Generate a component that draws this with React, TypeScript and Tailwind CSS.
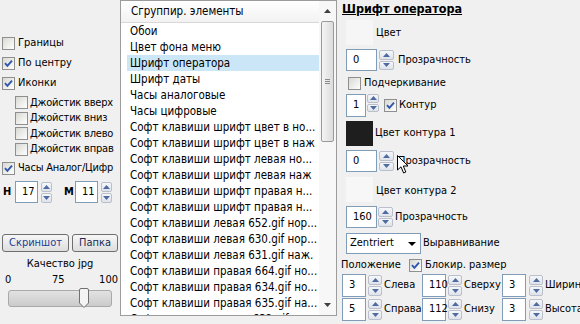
import clsx from "clsx";

const items = [
  "Обои",
  "Цвет фона меню",
  "Шрифт оператора",
  "Шрифт даты",
  "Часы аналоговые",
  "Часы цифровые",
  "Софт клавиши шрифт цвет в но...",
  "Софт клавиши шрифт цвет в наж",
  "Софт клавиши шрифт левая но...",
  "Софт клавиши шрифт левая наж",
  "Софт клавиши шрифт правая н...",
  "Софт клавиши шрифт правая н...",
  "Софт клавиши левая 652.gif нор...",
  "Софт клавиши левая 630.gif нор...",
  "Софт клавиши левая 631.gif наж.",
  "Софт клавиши правая 664.gif но...",
  "Софт клавиши правая 634.gif но...",
  "Софт клавиши правая 635.gif на...",
  "Софт клавиши центр. 632.gif но...",
];

function Check({ checked }: { checked?: boolean }) {
  return (
    <span className="flex h-[13px] w-[13px] shrink-0 items-center justify-center border border-[#8e8f8f] bg-gradient-to-br from-[#d8d8d3] to-white">
      {checked && (
        <svg width="9" height="9" viewBox="0 0 9 9">
          <path d="M1 4.2 L3.4 6.8 L8 1.6" fill="none" stroke="#2f55b0" strokeWidth="1.9" />
        </svg>
      )}
    </span>
  );
}

function Field({ value, className }: { value: string; className?: string }) {
  return (
    <div className={clsx("flex shrink-0 items-center border border-[#7f9db9] bg-white pl-[6px] text-black", className)}>
      {value}
    </div>
  );
}

function Arrow({ up }: { up?: boolean }) {
  return (
    <svg width="7" height="4" viewBox="0 0 7 4">
      <path d={up ? "M0 4 L3.5 0 L7 4 Z" : "M0 0 L3.5 4 L7 0 Z"} fill="#4d6aa3" />
    </svg>
  );
}

function Spin({ className }: { className?: string }) {
  return (
    <div className={clsx("flex shrink-0 flex-col gap-px", className)}>
      <div className="flex flex-1 items-center justify-center rounded-[2px] border border-[#b9c0cb] bg-gradient-to-b from-[#f6f7f9] to-[#dfe3ea]">
        <Arrow up />
      </div>
      <div className="flex flex-1 items-center justify-center rounded-[2px] border border-[#b9c0cb] bg-gradient-to-b from-[#f6f7f9] to-[#dfe3ea]">
        <Arrow />
      </div>
    </div>
  );
}

function Swatch({ className }: { className?: string }) {
  return <div className={clsx("h-[25px] w-[27px] shrink-0", className)} />;
}

function LeftPanel() {
  return (
    <div className="flex w-[120px] shrink-0 flex-col text-[11px] text-black">
      <div className="ml-[2px] mt-[36px] flex h-[14px] items-center gap-[3px]">
        <Check />
        Границы
      </div>
      <div className="ml-[2px] mt-[6px] flex h-[14px] items-center gap-[3px]">
        <Check checked />
        По центру
      </div>
      <div className="ml-[2px] mt-[6px] flex h-[14px] items-center gap-[3px]">
        <Check checked />
        Иконки
      </div>
      <div className="ml-[15px] mt-[5px] flex flex-col">
        {["Джойстик вверх", "Джойстик вниз", "Джойстик влево", "Джойстик вправ"].map((t) => (
          <div key={t} className="flex h-[15.5px] items-center gap-[2px] whitespace-nowrap tracking-[-0.2px]">
            <Check />
            {t}
          </div>
        ))}
      </div>
      <div className="ml-[2px] mt-[4px] flex h-[14px] items-center gap-[3px] whitespace-nowrap tracking-[-0.2px]">
        <Check checked />
        Часы Аналог/Цифр
      </div>
      <div className="ml-[3px] mt-[6px] flex h-[22px] items-center">
        <span className="w-[12px] font-bold">H</span>
        <Field value="17" className="h-[22px] w-[23px]" />
        <Spin className="ml-[3px] h-[21px] w-[11px]" />
        <span className="ml-[12px] w-[11px] font-bold">M</span>
        <Field value="11" className="h-[22px] w-[23px]" />
        <Spin className="ml-[3px] h-[21px] w-[11px]" />
      </div>
      <div className="ml-[2px] mt-[31px] flex h-[18px] gap-[3px]">
        <div className="flex w-[67px] items-center justify-center rounded-[3px] border border-[#6f6f6f] bg-gradient-to-b from-[#f7f7f7] to-[#dedede] text-[#1a3d97]">
          Скриншот
        </div>
        <div className="flex w-[46px] items-center justify-center rounded-[3px] border border-[#6f6f6f] bg-gradient-to-b from-[#f7f7f7] to-[#dedede] text-[#1c2a4e]">
          Папка
        </div>
      </div>
      <div className="mt-[4px] flex h-[16px] items-center justify-center">Качество jpg</div>
      <div className="flex h-[16px] items-center justify-between pl-[5px] pr-[2px]">
        <span>0</span>
        <span className="pl-[6px]">75</span>
        <span>100</span>
      </div>
      <div className="relative ml-[8px] mt-[2px] h-[17px] w-[104px] rounded-[3px] border border-[#a9a9a9] bg-gradient-to-b from-[#e2e2e2] to-[#cbcbcb]">
        <svg className="absolute left-[70px] top-[-3px]" width="10" height="20" viewBox="0 0 10 20">
          <path d="M0.5 2 Q0.5 0.5 2 0.5 L8 0.5 Q9.5 0.5 9.5 2 L9.5 15 L5 19.5 L0.5 15 Z" fill="#f4f4f4" stroke="#707070" />
        </svg>
      </div>
    </div>
  );
}

function ListBox() {
  return (
    <div className="flex h-[316px] w-[217px] shrink-0 border border-[#9c9c9c] bg-white text-[11.5px] text-black">
      <div className="flex min-w-0 flex-1 flex-col">
        <div className="flex h-[22px] shrink-0 items-center border-b border-[#d8d8d8] bg-gradient-to-b from-white to-[#f2f2f2] pl-[10px]">
          Сгруппир. элементы
        </div>
        <div className="flex flex-col overflow-hidden">
          {items.map((t, i) => (
            <div
              key={i}
              className={clsx(
                "ml-[6px] h-[16px] shrink-0 overflow-hidden whitespace-nowrap pl-[3px] leading-[16px]",
                i === 2 && "bg-[#cbe6f6]",
              )}
            >
              {t}
            </div>
          ))}
        </div>
      </div>
      <div className="flex w-[17px] shrink-0 flex-col items-center bg-[#f7f7f7]">
        <div className="flex h-[20px] items-center justify-center">
          <svg width="7" height="4" viewBox="0 0 7 4">
            <path d="M0 4 L3.5 0 L7 4 Z" fill="#404040" />
          </svg>
        </div>
        <div className="flex h-[121px] w-[13px] items-center justify-center rounded-[2px] border border-[#9a9a9a] bg-gradient-to-r from-[#f4f4f4] to-[#dcdcdc]">
          <div className="flex flex-col gap-px">
            <div className="h-px w-[5px] bg-[#8a8a8a]" />
            <div className="h-px w-[5px] bg-[#8a8a8a]" />
            <div className="h-px w-[5px] bg-[#8a8a8a]" />
          </div>
        </div>
        <div className="flex-1" />
        <div className="flex h-[16px] items-center justify-center pb-[4px]">
          <svg width="7" height="4" viewBox="0 0 7 4">
            <path d="M0 0 L3.5 4 L7 0 Z" fill="#404040" />
          </svg>
        </div>
      </div>
    </div>
  );
}

function RightPanel() {
  return (
    <div className="relative flex min-w-0 flex-1 flex-col overflow-hidden text-[11px] text-black">
      <div className="ml-[5px] h-[19px] pt-[1px] text-[12.5px] font-bold leading-[16px] underline">Шрифт оператора</div>
      <div className="ml-[9px] mt-[1px] flex h-[25px] items-center">
        <Swatch className="bg-[#f6f6f6]" />
        <span className="ml-[3px] mt-[2px]">Цвет</span>
      </div>
      <div className="ml-[9px] mt-[4px] flex h-[22px] items-center">
        <Field value="0" className="h-[22px] w-[31px]" />
        <Spin className="ml-[2px] h-[20px] w-[15px]" />
        <span className="ml-[4px]">Прозрачность</span>
      </div>
      <div className="ml-[11px] mt-[6px] flex h-[13px] items-center gap-[3px]">
        <Check />
        Подчеркивание
      </div>
      <div className="ml-[9px] mt-[4px] flex h-[23px] items-center">
        <Field value="1" className="h-[23px] w-[20px]" />
        <Spin className="ml-[1px] h-[18px] w-[12px] self-start" />
        <span className="ml-[5px] flex items-center gap-[2px]">
          <Check checked />
          Контур
        </span>
      </div>
      <div className="ml-[9px] mt-[4px] flex h-[25px] items-center">
        <Swatch className="bg-[#1e1e1e]" />
        <span className="ml-[2px]">Цвет контура 1</span>
      </div>
      <div className="ml-[9px] mt-[4px] flex h-[22px] items-center">
        <Field value="0" className="h-[22px] w-[31px]" />
        <Spin className="ml-[2px] h-[20px] w-[15px]" />
        <span className="ml-[4px]">Прозрачность</span>
      </div>
      <div className="ml-[9px] mt-[5px] flex h-[25px] items-center">
        <Swatch className="bg-[#f7f7f7]" />
        <span className="ml-[3px] mt-[4px]">Цвет контура 2</span>
      </div>
      <div className="ml-[9px] mt-[4px] flex h-[22px] items-center">
        <Field value="160" className="h-[22px] w-[31px]" />
        <Spin className="ml-[1px] h-[20px] w-[15px]" />
        <span className="ml-[2px]">Прозрачность</span>
      </div>
      <div className="ml-[9px] mt-[5px] flex h-[21px] items-center">
        <div className="flex h-[21px] w-[75px] items-center justify-between border border-[#7f9db9] bg-white pl-[3px] pr-[4px]">
          Zentriert
          <svg width="8" height="4" viewBox="0 0 8 4">
            <path d="M0 0 L4 4 L8 0 Z" fill="#000" />
          </svg>
        </div>
        <span className="ml-[2px]">Выравнивание</span>
      </div>
      <div className="ml-[4px] mt-[4px] flex h-[14px] items-center">
        <span>Положение</span>
        <span className="ml-[8px] flex items-center gap-[3px]">
          <Check checked />
          Блокир. размер
        </span>
      </div>
      <div className="ml-[5px] mt-[2px] flex flex-col gap-px">
        {[
          ["3", "Слева", "110", "Сверху", "3", "Ширина"],
          ["5", "Справа", "112", "Снизу", "3", "Высота"],
        ].map((r) => (
          <div key={r[1]} className="flex h-[23px] items-center whitespace-nowrap">
            <Field value={r[0]} className="h-[23px] w-[24px] pl-[3px]" />
            <Spin className="ml-[2px] h-[21px] w-[14px]" />
            <span className="ml-[2px] w-[38px] shrink-0">{r[1]}</span>
            <Field value={r[2]} className="h-[23px] w-[24px] pl-[3px]" />
            <Spin className="ml-[2px] h-[21px] w-[14px]" />
            <span className="ml-[2px] w-[38px] shrink-0">{r[3]}</span>
            <Field value={r[4]} className="h-[23px] w-[24px] pl-[3px]" />
            <Spin className="ml-[3px] h-[21px] w-[14px]" />
            <span className="ml-[2px] shrink-0">{r[5]}</span>
          </div>
        ))}
      </div>
      <svg className="absolute left-[60px] top-[155px]" width="12" height="19" viewBox="0 0 12 19">
        <path d="M0.5 0.5 L0.5 15 L4 11.8 L6.6 18 L8.8 17 L6.3 11 L11 11 Z" fill="#fff" stroke="#000" strokeWidth="1" />
      </svg>
    </div>
  );
}

export default function App() {
  return (
    <div className="flex h-[324px] w-[580px] overflow-hidden bg-[#f0f0f0] font-['DejaVu_Sans_Condensed','DejaVu_Sans',sans-serif]">
      <LeftPanel />
      <ListBox />
      <RightPanel />
    </div>
  );
}
